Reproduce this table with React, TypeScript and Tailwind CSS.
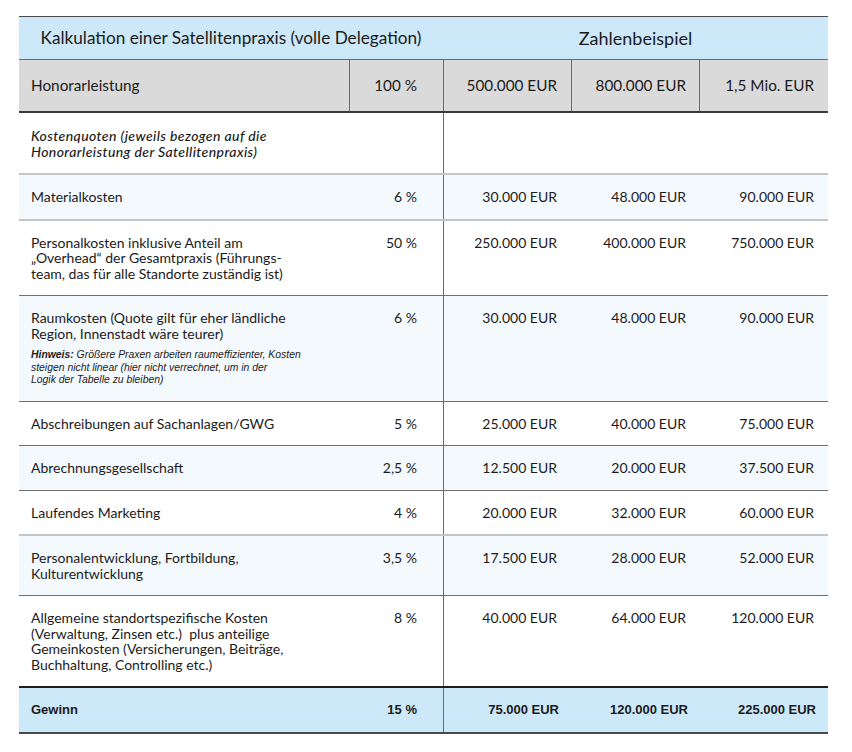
import React from 'react';

type CostRow = {
  label: React.ReactNode;
  pct: string;
  values: string[];
  shaded: boolean;
  line: string;
  note?: React.ReactNode;
};

const rows: CostRow[] = [
  {
    label: 'Materialkosten',
    pct: '6 %',
    values: ['30.000 EUR', '48.000 EUR', '90.000 EUR'],
    shaded: true,
    line: 'border-b-2 border-[#c2c5c9]',
  },
  {
    label: (
      <>
        Personalkosten inklusive Anteil am
        <br />
        „Overhead“ der Gesamtpraxis (Führungs-
        <br />
        team, das für alle Standorte zuständig ist)
      </>
    ),
    pct: '50 %',
    values: ['250.000 EUR', '400.000 EUR', '750.000 EUR'],
    shaded: false,
    line: 'border-b border-[#6f6f6f]',
  },
  {
    label: (
      <>
        Raumkosten (Quote gilt für eher ländliche
        <br />
        Region, Innenstadt wäre teurer)
      </>
    ),
    note: (
      <>
        <span className="font-bold">Hinweis:</span> Größere Praxen arbeiten raumeffizienter, Kosten
        <br />
        steigen nicht linear (hier nicht verrechnet, um in der
        <br />
        Logik der Tabelle zu bleiben)
      </>
    ),
    pct: '6 %',
    values: ['30.000 EUR', '48.000 EUR', '90.000 EUR'],
    shaded: true,
    line: 'border-b border-[#6f6f6f]',
  },
  {
    label: 'Abschreibungen auf Sachanlagen/GWG',
    pct: '5 %',
    values: ['25.000 EUR', '40.000 EUR', '75.000 EUR'],
    shaded: false,
    line: 'border-b border-[#6f6f6f]',
  },
  {
    label: 'Abrechnungsgesellschaft',
    pct: '2,5 %',
    values: ['12.500 EUR', '20.000 EUR', '37.500 EUR'],
    shaded: true,
    line: 'border-b border-[#6f6f6f]',
  },
  {
    label: 'Laufendes Marketing',
    pct: '4 %',
    values: ['20.000 EUR', '32.000 EUR', '60.000 EUR'],
    shaded: false,
    line: 'border-b-2 border-[#c2c5c9]',
  },
  {
    label: (
      <>
        Personalentwicklung, Fortbildung,
        <br />
        Kulturentwicklung
      </>
    ),
    pct: '3,5 %',
    values: ['17.500 EUR', '28.000 EUR', '52.000 EUR'],
    shaded: true,
    line: 'border-b border-[#6f6f6f]',
  },
  {
    label: (
      <>
        Allgemeine standortspezifische Kosten
        <br />
        (Verwaltung, Zinsen etc.)&nbsp; plus anteilige
        <br />
        Gemeinkosten (Versicherungen, Beiträge,
        <br />
        Buchhaltung, Controlling etc.)
      </>
    ),
    pct: '8 %',
    values: ['40.000 EUR', '64.000 EUR', '120.000 EUR'],
    shaded: false,
    line: 'border-b-2 border-[#1e1e1e]',
  },
];

const cols = 'grid grid-cols-[330px_94px_128px_128px_129px]';

export default function App() {
  return (
    <div className="min-h-[752px] w-[852px] bg-white pt-[16px] pl-[19px] font-['Lato','Open_Sans',sans-serif] text-[#1b1b1b]">
      <div className="w-[809px]">
        {/* title row */}
        <div className={`${cols} h-[44px] border-t border-b border-t-[#4a4a4a] border-b-[#6a6a6a] bg-[#cde8f8] text-[17.2px]`}>
          <div className="col-span-2 flex items-center justify-center">
            Kalkulation einer Satellitenpraxis (volle Delegation)
          </div>
          <div className="col-span-3 flex items-center justify-center text-[18px]">Zahlenbeispiel</div>
        </div>

        {/* header row */}
        <div className={`${cols} h-[53px] border-b-2 border-[#3a3a3a] bg-[#dadada] text-[15.3px]`}>
          <div className="flex items-center pl-[12px]">Honorarleistung</div>
          <div className="flex items-center justify-end border-l border-[#6a6a6a] pr-[26px]">100 %</div>
          <div className="flex items-center justify-end border-l border-[#6a6a6a] pr-[14px]">500.000 EUR</div>
          <div className="flex items-center justify-end border-l border-[#6a6a6a] pr-[13px]">800.000 EUR</div>
          <div className="flex items-center justify-end border-l border-[#6a6a6a] pr-[14px]">1,5 Mio. EUR</div>
        </div>

        {/* section label */}
        <div className={`${cols} border-b-2 border-[#c2c5c9] bg-white`}>
          <div className="col-span-2 pl-[12px] pt-[15px] pb-[13px] text-[14px] leading-[16px] font-medium italic tracking-[0.4px]">
            Kostenquoten (jeweils bezogen auf die
            <br />
            Honorarleistung der Satellitenpraxis)
          </div>
          <div className="col-span-3 border-l border-[#6a6a6a]" />
        </div>

        {rows.map((row, i) => (
          <div
            key={i}
            className={`${cols} ${row.line} ${row.shaded ? 'bg-[#f4f9fe]' : 'bg-white'} text-[14px] leading-[15.5px]`}
          >
            <div className="pl-[12px] pt-[14px] pb-[14px]">
              <div>{row.label}</div>
              {row.note && (
                <div className="mt-[8px] font-['Liberation_Sans',Arial,sans-serif] text-[10.4px] leading-[12.5px] italic">
                  {row.note}
                </div>
              )}
            </div>
            <div className="pt-[14px] pr-[26px] text-right">{row.pct}</div>
            <div className="border-l border-[#6a6a6a] pt-[14px] pr-[14px] text-right">{row.values[0]}</div>
            <div className="pt-[14px] pr-[13px] text-right">{row.values[1]}</div>
            <div className="pt-[14px] pr-[14px] text-right">{row.values[2]}</div>
          </div>
        ))}

        {/* result row */}
        <div className={`${cols} h-[46px] border-b-2 border-[#4a4a4a] bg-[#cde8f8] font-['Liberation_Sans',Arial,sans-serif] text-[13px] font-bold`}>
          <div className="flex items-center pl-[12px]">Gewinn</div>
          <div className="flex items-center justify-end pr-[26px]">15 %</div>
          <div className="flex items-center justify-end border-l border-[#6a6a6a] pr-[12px]">75.000 EUR</div>
          <div className="flex items-center justify-end pr-[11px]">120.000 EUR</div>
          <div className="flex items-center justify-end pr-[12px]">225.000 EUR</div>
        </div>
      </div>
    </div>
  );
}
